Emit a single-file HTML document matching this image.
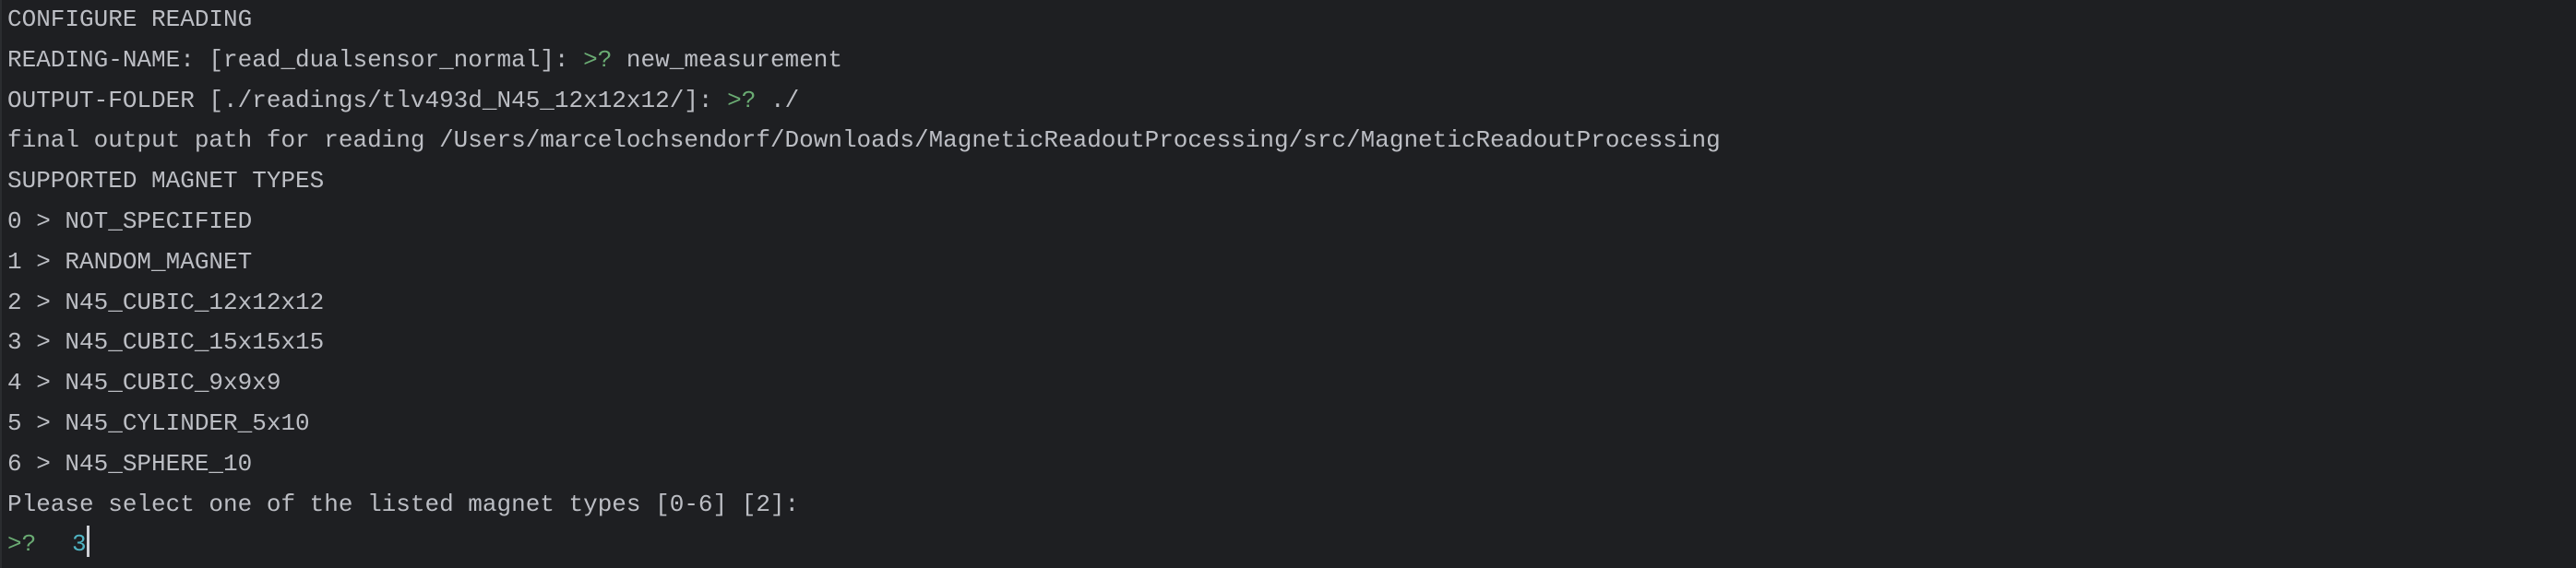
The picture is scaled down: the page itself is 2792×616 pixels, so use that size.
<!DOCTYPE html>
<html><head><meta charset="utf-8"><style>
html,body{margin:0;padding:0;background:#1e1f22;width:2792px;height:616px;overflow:hidden}
body{border-left:2px solid #2b2d30;box-sizing:border-box}
pre{margin:0;position:absolute;left:8px;top:0px;font-family:"Liberation Mono",monospace;font-size:26px;line-height:43.8px;color:#bcbec4;white-space:pre}
.g{color:#6aab73}.c{color:#4fb3c2;margin-left:-8px}
.cur{display:inline-block;width:3px;height:34px;background:#ced0d6;vertical-align:-7px}
</style></head><body><pre>CONFIGURE READING
READING-NAME: [read_dualsensor_normal]: <span class="g">&gt;?</span> new_measurement
OUTPUT-FOLDER [./readings/tlv493d_N45_12x12x12/]: <span class="g">&gt;?</span> ./
final output path for reading /Users/marcelochsendorf/Downloads/MagneticReadoutProcessing/src/MagneticReadoutProcessing
SUPPORTED MAGNET TYPES
0 &gt; NOT_SPECIFIED
1 &gt; RANDOM_MAGNET
2 &gt; N45_CUBIC_12x12x12
3 &gt; N45_CUBIC_15x15x15
4 &gt; N45_CUBIC_9x9x9
5 &gt; N45_CYLINDER_5x10
6 &gt; N45_SPHERE_10
Please select one of the listed magnet types [0-6] [2]:
<span class="g">&gt;?</span>   <span class="c">3</span><span class="cur"></span></pre></body></html>
